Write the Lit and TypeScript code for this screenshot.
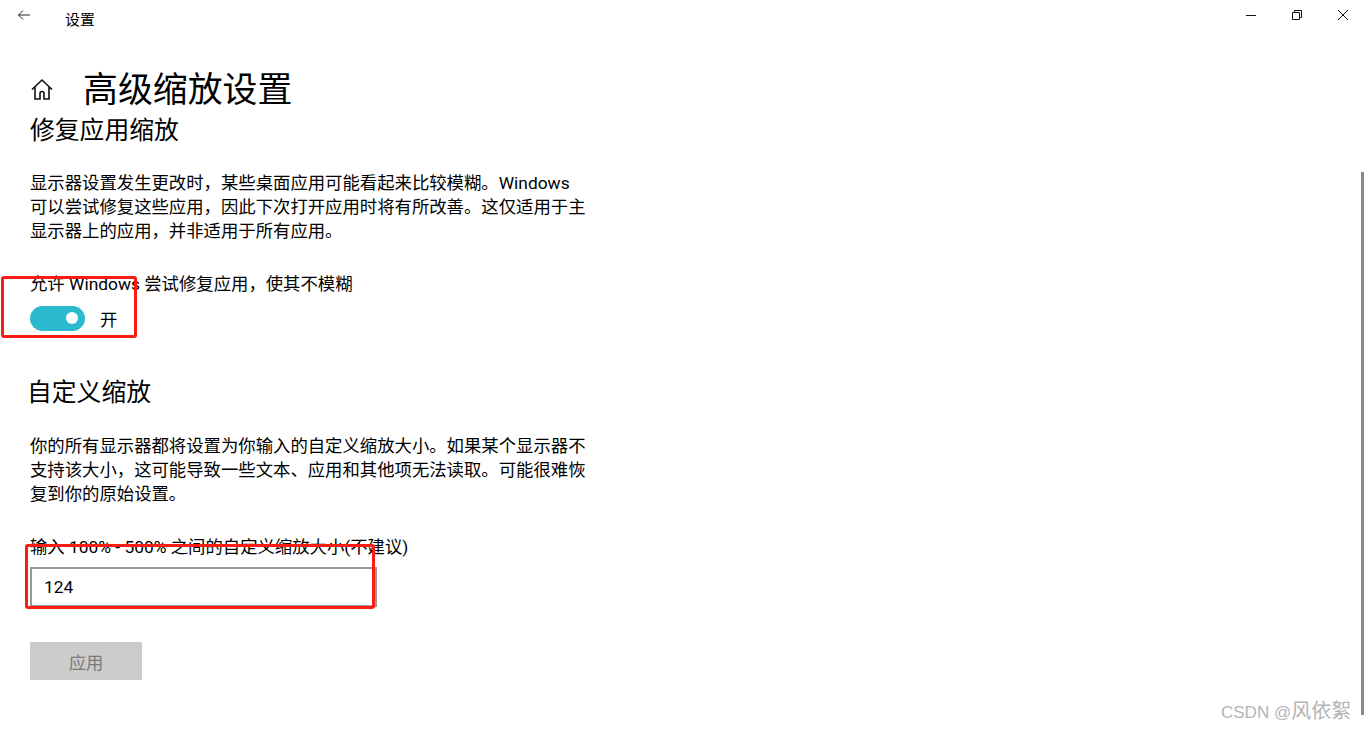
import { LitElement, html, css } from "lit";
import { customElement } from "lit/decorators.js";

@customElement("app-root")
export class AppRoot extends LitElement {
  static styles = css`
    :host { display: block; width: 1366px; height: 730px; }
    .page {
      position: relative; width: 1366px; height: 730px; overflow: hidden; background: #fff; color: #000;
      font-family: Roboto, "Noto Sans CJK SC", sans-serif; font-size: 17.36px; line-height: 24px;
    }
    .titlebar { display: flex; align-items: flex-start; height: 40px; }
    .back { width: 12px; height: 10px; margin: 10px 0 0 18px; }
    .apptitle { font-size: 14.9px; line-height: 20px; margin: 10px 0 0 35px; flex: 1; }
    .winbtns { display: flex; gap: 36px; padding: 10px 18px 0 0; }
    .winbtns svg { width: 10px; height: 10px; display: block; }
    .main { padding: 24px 0 0 30px; width: 556px; }
    .head { display: flex; align-items: center; height: 50px; }
    .home { width: 24px; height: 24px; margin-right: 29px; }
    h1 { margin: 4px 0 0; font-weight: 400; font-size: 34.9px; line-height: 50px; }
    h2 { margin: 0; font-weight: 400; font-size: 24.8px; line-height: 32px; }
    .h2a { margin-top: 1px; }
    .h2b { margin-top: 46px; margin-left: -3px; }
    p { margin: 0; }
    .desc { margin-top: 24px; }
    .desc2 { margin-top: 25px; }
    .label { margin-top: 29px; white-space: nowrap; }
    .toggle-row { display: flex; align-items: center; gap: 15px; margin-top: 9px; height: 26px; }
    .toggle-text { margin-top: 4px; }
    .track { width: 55px; height: 25px; border-radius: 13px; background: #2bb9cf; display: flex; justify-content: flex-end; align-items: center; padding-right: 7px; box-sizing: border-box; }
    .knob { width: 12px; height: 12px; border-radius: 50%; background: #fff; }
    .input {
      box-sizing: border-box; width: 347px; height: 40px; margin-top: 8px; border: 2px solid #999;
      padding-left: 12px; line-height: 36px; color: #000;
    }
    .apply {
      box-sizing: border-box; width: 112px; height: 38px; margin-top: 35px; padding-top: 3px; background: #ccc; color: #7a7a7a;
      display: flex; align-items: center; justify-content: center;
    }
    .scroll { position: absolute; left: 1361px; top: 172px; width: 3px; height: 543px; background: #8a8a8a; }
    .mark { position: absolute; border: 3px solid #fb1c14; border-radius: 3px; box-sizing: border-box; }
    .m1 { left: 1px; top: 276px; width: 136px; height: 62px; }
    .m2 { left: 25px; top: 544px; width: 350px; height: 65px; }
    .wm { position: absolute; left: 1221px; top: 698px; font-size: 17px; line-height: 26px; color: #b4b4b4; white-space: nowrap; font-family: "Liberation Sans", "Noto Sans CJK SC", sans-serif; }
    .wm-cjk { font-size: 20px; }
  `;

  render() {
    return html`
      <div class="page">
        <div class="titlebar">
          <svg class="back" viewBox="0 0 12 10" fill="none" stroke="#222" stroke-width="1">
            <path d="M0.5 5H12M5 0.5L0.5 5L5 9.5" />
          </svg>
          <div class="apptitle">设置</div>
          <div class="winbtns">
            <svg viewBox="0 0 10 10" fill="none" stroke="#111" stroke-width="1"><path d="M0 5.5H10" /></svg>
            <svg viewBox="0 0 10 10" fill="none" stroke="#111" stroke-width="1"><path d="M0.5 2.5H7.5V9.5H0.5ZM2.5 2.5V0.5H9.5V7.5H7.5" /></svg>
            <svg viewBox="0 0 10 10" fill="none" stroke="#111" stroke-width="1"><path d="M0 0L10 10M10 0L0 10" /></svg>
          </div>
        </div>
        <div class="main">
          <div class="head">
            <svg class="home" viewBox="0 0 24 24" fill="none" stroke="#111" stroke-width="1.6">
              <path d="M2 12.5L12 3L22 12.5M5 10V22H10V16.5A2 2 0 0 1 14 16.5V22H19V10" />
            </svg>
            <h1>高级缩放设置</h1>
          </div>
          <h2 class="h2a">修复应用缩放</h2>
          <p class="desc">显示器设置发生更改时，某些桌面应用可能看起来比较模糊。Windows<br />可以尝试修复这些应用，因此下次打开应用时将有所改善。这仅适用于主<br />显示器上的应用，并非适用于所有应用。</p>
          <p class="label">允许 Windows 尝试修复应用，使其不模糊</p>
          <div class="toggle-row"><div class="track"><div class="knob"></div></div><span class="toggle-text">开</span></div>
          <h2 class="h2b">自定义缩放</h2>
          <p class="desc2">你的所有显示器都将设置为你输入的自定义缩放大小。如果某个显示器不<br />支持该大小，这可能导致一些文本、应用和其他项无法读取。可能很难恢<br />复到你的原始设置。</p>
          <p class="label">输入 100% - 500% 之间的自定义缩放大小(不建议)</p>
          <div class="input">124</div>
          <div class="apply">应用</div>
        </div>
        <div class="scroll"></div>
        <div class="mark m1"></div>
        <div class="mark m2"></div>
        <div class="wm">CSDN @<span class="wm-cjk">风依絮</span></div>
      </div>
    `;
  }
}
